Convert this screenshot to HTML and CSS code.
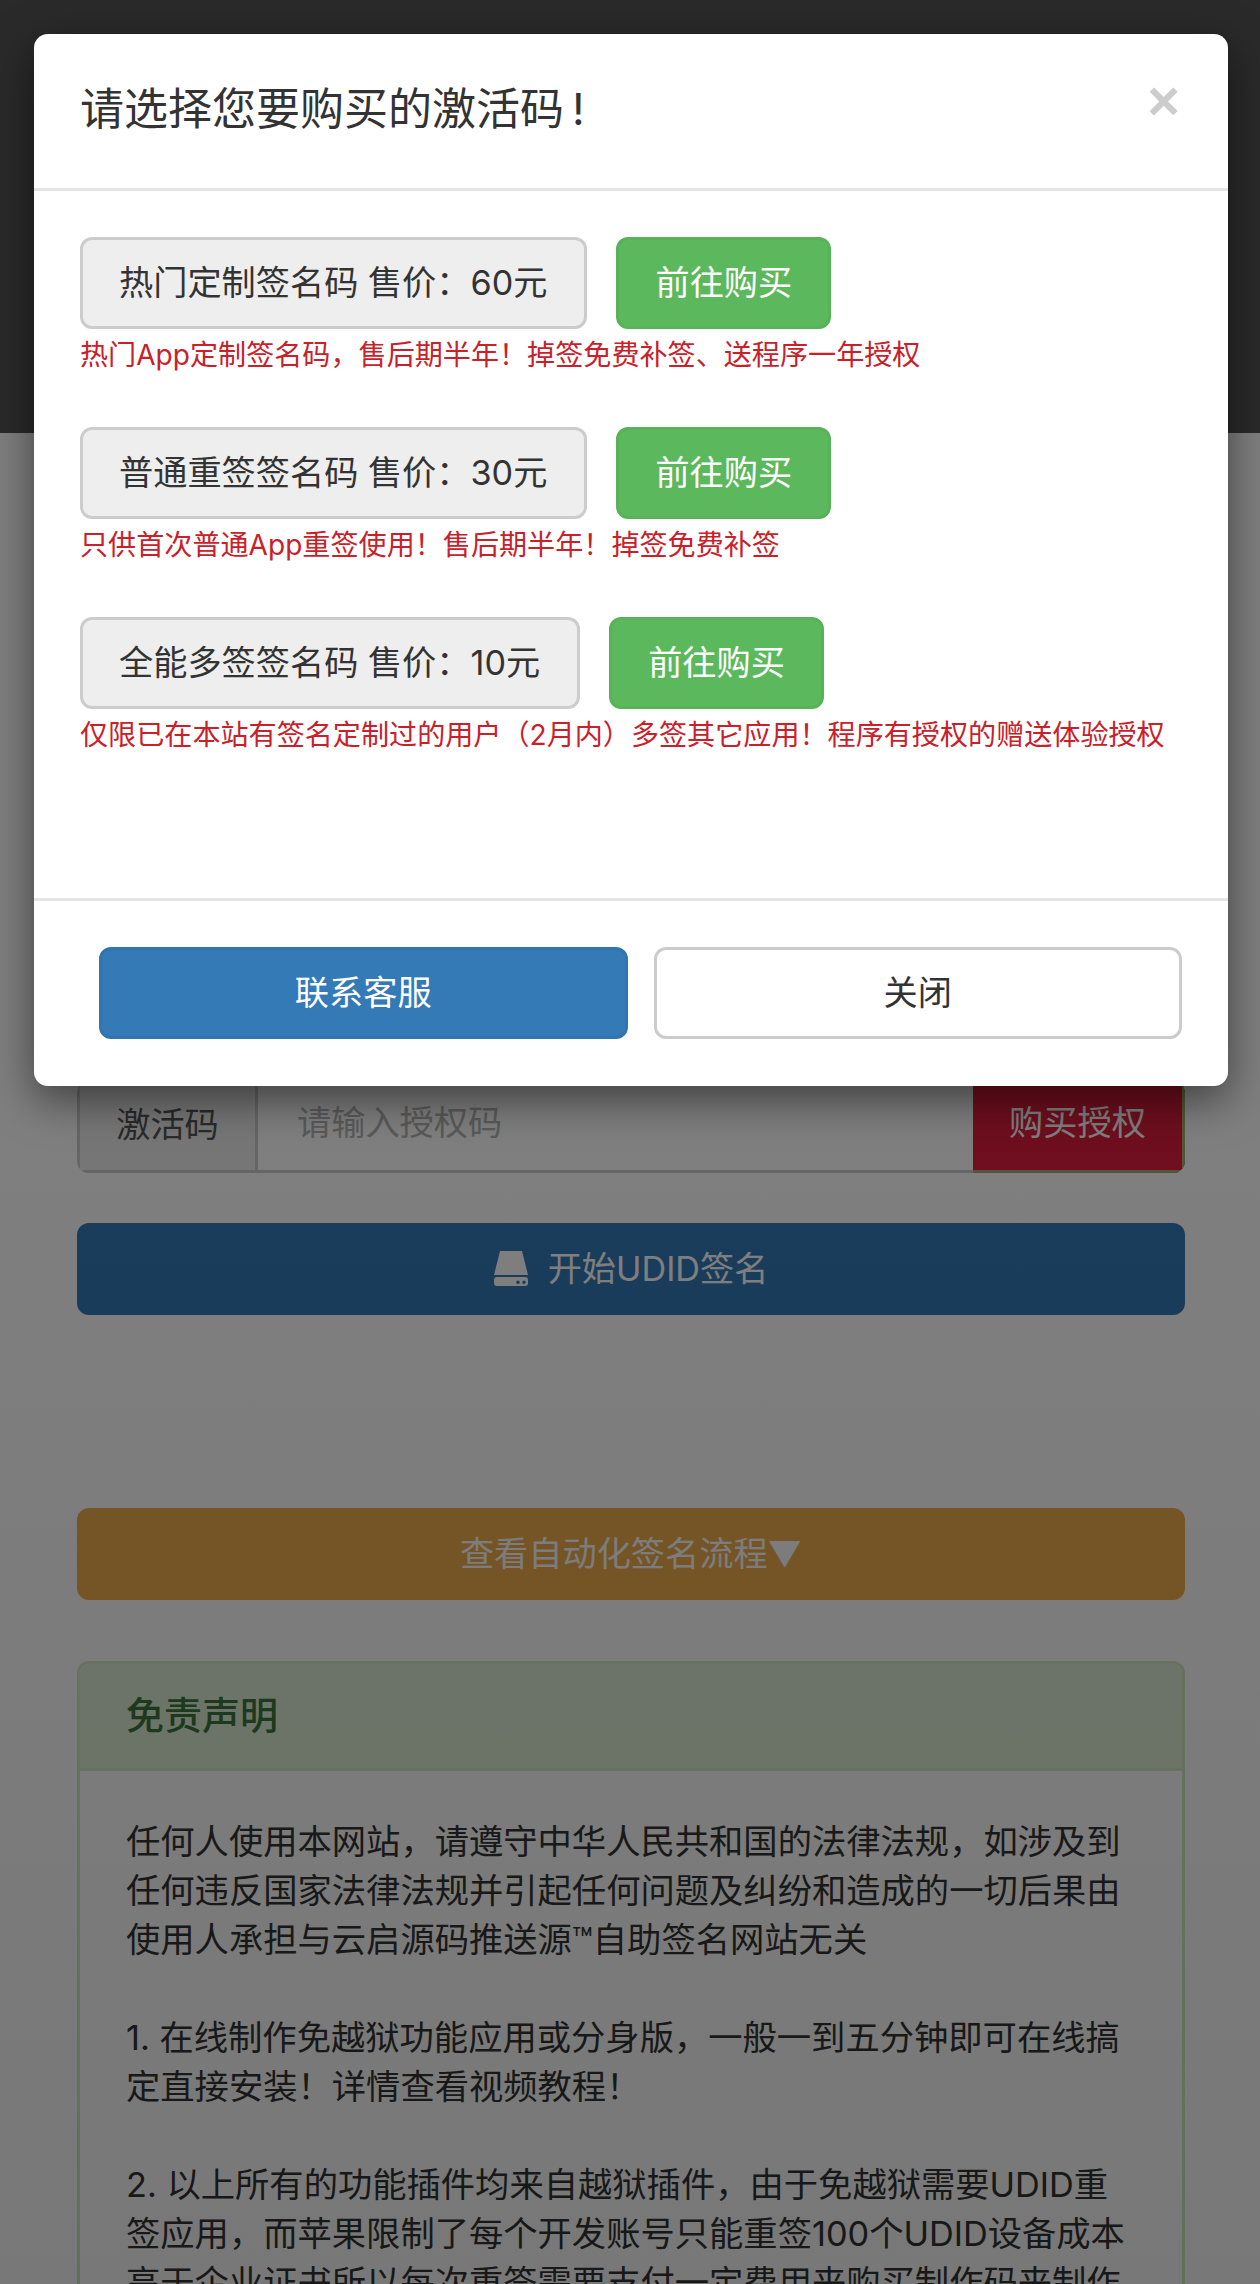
FILE: index.html
```html
<!DOCTYPE html>
<html lang="zh-CN">
<head>
<meta charset="utf-8">
<title>免责声明</title>
<link rel="stylesheet" href="styles.css">
</head>
<body>
<div class="page">
  <div class="band"></div>
  <main class="content">
    <div class="input-group">
      <span class="addon">激活码</span>
      <span class="fake-input">请输入授权码</span>
      <span class="buy">购买授权</span>
    </div>
    <div class="wide wide-blue">
      <svg class="hdd" viewBox="0 0 34 35" aria-hidden="true"><path d="M6 0h22l6 24H0z"/><path fill-rule="evenodd" d="M3 26h28a3 3 0 0 1 3 3v3a3 3 0 0 1-3 3H3a3 3 0 0 1-3-3v-3a3 3 0 0 1 3-3zm21 3.500a1.800 1.800 0 1 0 0 3.600 1.800 1.800 0 0 0 0-3.600zm6 0a1.800 1.800 0 1 0 0 3.600 1.800 1.800 0 0 0 0-3.600z"/></svg>
      <span>开始UDID签名</span>
    </div>
    <div class="wide wide-orange">查看自动化签名流程▼</div>
    <section class="panel">
      <h3 class="panel-title">免责声明</h3>
      <div class="panel-body">
        任何人使用本网站，请遵守中华人民共和国的法律法规，如涉及到任何违反国家法律法规并引起任何问题及纠纷和造成的一切后果由使用人承担与云启源码推送源™自助签名网站无关<br><br>
        1. 在线制作免越狱功能应用或分身版，一般一到五分钟即可在线搞定直接安装！详情查看视频教程！<br><br>
        2. 以上所有的功能插件均来自越狱插件，由于免越狱需要UDID重签应用，而苹果限制了每个开发账号只能重签100个UDID设备成本高于企业证书所以每次重签需要支付一定费用来购买制作码来制作
      </div>
    </section>
  </main>
</div>
<div class="backdrop"></div>
<div class="modal-wrap">
  <div class="modal">
    <header class="modal-header">
      <h4 class="modal-title">请选择您要购买的激活码&#8201;!</h4>
      <span class="close">×</span>
    </header>
    <div class="modal-body">
      <div class="offer">
        <div class="offer-row"><span class="btn btn-label">热门定制签名码 售价：60元</span><span class="btn btn-green">前往购买</span></div>
        <p class="note">热门App定制签名码，售后期半年！掉签免费补签、送程序一年授权</p>
      </div>
      <div class="offer">
        <div class="offer-row"><span class="btn btn-label">普通重签签名码 售价：30元</span><span class="btn btn-green">前往购买</span></div>
        <p class="note">只供首次普通App重签使用！售后期半年！掉签免费补签</p>
      </div>
      <div class="offer">
        <div class="offer-row"><span class="btn btn-label">全能多签签名码 售价：10元</span><span class="btn btn-green">前往购买</span></div>
        <p class="note">仅限已在本站有签名定制过的用户（2月内）多签其它应用！程序有授权的赠送体验授权</p>
      </div>
    </div>
    <footer class="modal-footer">
      <span class="btn btn-foot btn-blue">联系客服</span>
      <span class="btn btn-foot btn-white">关闭</span>
    </footer>
  </div>
</div>
</body>
</html>
```
FILE: styles.css
```css
* { box-sizing: border-box; }
html, body {
  margin: 0;
  height: 2284px;
  overflow: hidden;
}
body {
  position: relative;
  background: #fff;
  color: #333;
  font-family: Inter, "Noto Sans CJK SC", sans-serif;
  font-size: 34.2px;
}
.page { height: 2284px; overflow: hidden; }
.band { height: 433px; background: #545454; }
.content { padding: 648px 75px 0 77px; }

.input-group {
  display: flex;
  height: 92px;
  border-radius: 12px;
  overflow: hidden;
  background: #fff;
}
.addon {
  width: 181px;
  padding-bottom: 11px;
  display: flex;
  align-items: center;
  justify-content: center;
  background: #eee;
  border: 3px solid #ccc;
  color: #555;
}
.fake-input {
  flex: 1;
  display: flex;
  align-items: center;
  padding-left: 39px;
  padding-bottom: 11px;
  border-bottom: 3px solid #ccc;
  color: #b4b4b4;
}
.buy {
  width: 212px;
  padding-bottom: 11px;
  display: flex;
  align-items: center;
  justify-content: center;
  background: #de1d3d;
  border-bottom: 3px solid #a8ac74;
  border-right: 3px solid #a8ac74;
  color: #fff;
}
.wide {
  height: 92px;
  padding-bottom: 6px;
  border-radius: 12px;
  display: flex;
  align-items: center;
  justify-content: center;
  color: #fff;
}
.wide-blue { margin-top: 50px; background: #337ab7; gap: 20px; }
.hdd { width: 34px; height: 35px; fill: #fff; margin-top: 5px; }
.wide-orange { margin-top: 193px; background: #f0ad4e; }

.panel {
  margin-top: 61px;
  border: 3px solid #d6e9c6;
  border-radius: 12px;
  background: #fff;
  overflow: hidden;
}
.panel-title {
  margin: 0;
  height: 107px;
  padding-left: 46px;
  padding-bottom: 8px;
  display: flex;
  align-items: center;
  background: #dff0d8;
  border-bottom: 3px solid #d6e9c6;
  color: #3c763d;
  font-size: 38px;
  font-weight: 500;
}
.panel-body {
  padding: 46px 46px;
  line-height: 49px;
  font-size: 34.3px;
  color: #333;
}

.backdrop {
  position: absolute;
  inset: 0;
  background: linear-gradient(to bottom, rgba(0, 0, 0, .5) 1100px, rgba(0, 0, 0, .53) 100%);
}
.modal-wrap {
  position: absolute;
  inset: 0;
  padding: 34px 32px 0 34px;
}
.modal {
  height: 1052px;
  display: flex;
  flex-direction: column;
  background: #fff;
  border-radius: 14px;
  box-shadow: 0 14px 44px rgba(0, 0, 0, .5);
}
.modal-header {
  height: 157px;
  padding: 44px 46px 0;
  display: flex;
  justify-content: space-between;
  align-items: flex-start;
  border-bottom: 3px solid #e5e5e5;
}
.modal-title {
  margin: 0;
  font-size: 44px;
  line-height: 62px;
  font-weight: 400;
  color: #333;
}
.close {
  margin: -12px 2px 0 0;
  font-family: "Liberation Sans", sans-serif;
  font-size: 56px;
  font-weight: 700;
  line-height: 70px;
  color: #ccc;
}
.modal-body {
  flex: 1;
  padding: 46px 46px 0;
}
.offer { margin-bottom: 52px; }
.offer-row { display: flex; gap: 29px; }
.btn {
  height: 92px;
  padding: 0 37px 6px;
  border-radius: 12px;
  display: inline-flex;
  align-items: center;
  justify-content: center;
  white-space: nowrap;
}
.btn-label {
  padding-left: 36px;
  background: #eee;
  border: 3px solid #ccc;
  color: #333;
}
.btn-green {
  padding: 0 36px 6px;
  background: #5cb85c;
  border: 3px solid #58b358;
  color: #fff;
}
.note {
  margin: 6px 0 0;
  font-size: 28.1px;
  line-height: 40px;
  color: #c9202a;
}
.modal-footer {
  height: 188px;
  padding: 46px 46px 0 65px;
  display: flex;
  gap: 26px;
  border-top: 3px solid #e5e5e5;
}
.btn-foot { flex: 1; }
.btn-blue { background: #337ab7; border: 3px solid #3175b0; color: #fff; }
.btn-white { background: #fff; border: 3px solid #ccc; color: #333; }
```
